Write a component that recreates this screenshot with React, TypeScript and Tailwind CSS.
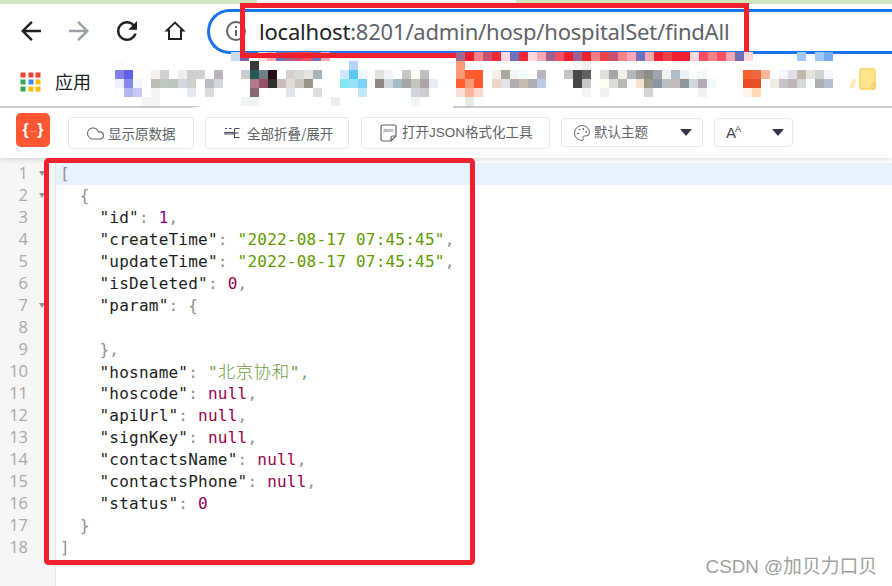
import React from "react";
import { Cloud, Palette } from "lucide-react";

type Tok = [string, string];
const K = "text-[#1c1c1c]";
const P = "text-[#8f8f8f]";
const S = "text-[#5f9a00]";
const N = "text-[#900090]";
const Z = "text-[#99004d]";

const key = (k: string, rest: Tok[]): Tok[] => [["    ", K], [`"${k}"`, K], [": ", P], ...rest];

const lines: Tok[][] = [
  [["[", P]],
  [["  {", P]],
  key("id", [["1", N], [",", P]]),
  key("createTime", [['"2022-08-17 07:45:45"', S], [",", P]]),
  key("updateTime", [['"2022-08-17 07:45:45"', S], [",", P]]),
  key("isDeleted", [["0", Z], [",", P]]),
  key("param", [["{", P]]),
  [["", P]],
  [["    },", P]],
  key("hosname", [['"北京协和"', "text-[#6f9a3c]"], [",", P]]),
  key("hoscode", [["null", Z], [",", P]]),
  key("apiUrl", [["null", Z], [",", P]]),
  key("signKey", [["null", Z], [",", P]]),
  key("contactsName", [["null", Z], [",", P]]),
  key("contactsPhone", [["null", Z], [",", P]]),
  key("status", [["0", Z]]),
  [["  }", P]],
  [["]", P]],
];

type Row = [number, number, number, string];
const rows: Row[] = [
  [231, 52, 9, "#c8dcf0 #8060a8 - #ffd8e0 #f8a8b0 #7070b8 #a06090 #c85070 #f85060 #7070b8 #f8a8b0"],
  [456, 52, 9, "#a06890 #f02030 #f88088 #c85070 #f02838 #ffd8e0 #7070b8 #f02838 #ffd8e0 #f8a8b0 #a06090 #f85060 #f02030 #a06090 #f02030 #f88088 #f04048 #c85070 #f88088 #f8a8b0 #7070b8 #f8a8b0 #f02030 #f04048 #f02030 #f02030 #ffd8e0 #f85060 #f88088 #f85060 #f8a8b0 #7070b8 #ffd8e0"],
  [797, 52, 9, "#a0c8f8 - #a0c8f8 #74acf0"],
  [115, 61, 9, "#fafaff - - - - - - - - - - - - - - #383838 - - - - - - - - - - #b4d4fc"],
  [115, 70, 9, "#8080e8 #6060e8 - - #f5f0ec #d0d0d0 - #eef0ee #d0d0d0 #d0d0d0 - #b8b4b8 - - #cccccc #225a58 #727e88 #280c14 - #d4d0d0 #d8dcdc #e8e4e2 #a8b4bc - - #d0e8fc #5cc8f4 #f0f8ff"],
  [115, 79, 9, "#f0f0fc #8888e8 #f4f4fc - #bcbcb4 #c0c8c4 #c0c4bc #d4d8dc #d0d0d0 - #c0bcc4 #d4d8dc - - - #b07888 #985068 #303030 #c8bcbc #e0dcd8 #ccc8c0 #989488 - - - #80e8f0 #98e0f8 #80d0fc"],
  [115, 88, 9, "- #b4b4f0 #c8c8f4 - #f4f4f4 - - - #e4e8ec - #dcdcdc - - - - #886870 - - - #e0e4ec - - #dcdee0 - - - - #c0e8fc"],
  [115, 97, 9, "- - - #f4f4f4 #f4f4f4 - - - - - - - - - #f0f4f0 #f0f4f0 - - - - - - - - #eeeeee"],
  [375, 61, 9, "- - - - - - - - - #ff9878 - - - - - - - - - - - - #f8f8f8 #f0f0f0"],
  [375, 70, 9, "#e0e0dc #f0f4f4 - #c8c8c8 #fffcf4 #c0c0c4 - - - #ff9878 #ff5c30 #ff5830 - #f4f0e8 #a8a8a0 #f4f4f4 #f0fcf8 #fffff8 #b4b8bc - - #c4c4c4 #484848 #606060 - #e0e0dc #a4a4a4 #f4f0e8 #b4b8bc #a09c98"],
  [375, 79, 9, "#908884 #d0d8dc #a8bcc8 #a8a4a4 #c4c4c0 #aca4a4 #e8ecf4 - - #ff6030 #ff9878 #ff5830 - #e8d8c8 #e4e4e8 #b0acb0 #c8bcb0 #b0acb4 #bccce0 - - - #484848 #c8c8c8 - #fffff0 #dcdcd8 #b8b8b8 #f8fafc #f4e0cc"],
  [375, 88, 9, "- - - - #d0d4d8 #cccccc - - - #ffe0d8 #ffb4a0 #ffd8d0 - - - - - - - - - - - #f4f4f4 - #f0f0f0"],
  [375, 97, 9, "- - - - #f0f4f4 - - - - - #e8ece8"],
  [644, 70, 9, "#8c8c88 #a0a4ac #f0f4f0 #b0bcc8 #f0eef0 - #f4f8fc - - - - #f46030 #f06840 #ffb49c - #f4f8fc #e0e0e8 #c0b8ac #e4e4e0 #d0d4d0 #f4f8fc"],
  [644, 79, 9, "#989c88 #9094a0 #b8c0c0 #c4bcb8 #8c949c #d0d8dc #b4acb4 #f0f8ff - - - #e84c28 #e85028 - #f0ece4 #c4c4c8 #c0b4b8 #d4d8d8 - #acb0ac #b4c0d0"],
  [644, 88, 9, "#d4d4d4 - - - - - #f0f0f0 - - - - #fff4e8 #ffd8b8"],
];

function Mosaic() {
  return (
    <>
      {rows.flatMap(([x, y, s, str], r) =>
        str.split(" ").map((c, i) =>
          c === "-" ? null : <rect key={`${r}-${i}`} x={x + i * s} y={y} width={s} height={s} fill={c} />
        )
      )}
    </>
  );
}

function Caret() {
  return (
    <svg width="12" height="7" viewBox="0 0 12 7" className="shrink-0">
      <path d="M0 0h12L6 7z" fill="#33364a" />
    </svg>
  );
}

const apps = ["#ea4335", "#ea4335", "#ea4335", "#34a853", "#4285f4", "#fbbc04", "#34a853", "#fbbc04", "#fbbc04"];

export default function App() {
  return (
    <div className="relative flex h-[586px] w-[892px] flex-col overflow-hidden bg-white [font-family:'Noto_Sans_CJK_SC',sans-serif]">
      {/* top strip */}
      <div className="flex h-1 shrink-0">
        <div className="w-[257px] bg-[#cde8bf]" />
        <div className="w-[259px] bg-white" />
        <div className="flex-1 bg-[#cde8bf]" />
      </div>

      {/* nav bar */}
      <div className="flex h-[54px] shrink-0 items-center pl-4">
        <svg width="30" height="30" viewBox="0 0 24 24" className="shrink-0" fill="#202124">
          <path d="M20 11H7.830l5.590-5.590L12 4l-8 8 8 8 1.410-1.410L7.830 13H20v-2z" />
        </svg>
        <svg width="30" height="30" viewBox="0 0 24 24" className="ml-[18px] shrink-0" fill="#9aa0a6">
          <path d="M4 11h12.170l-5.590-5.590L12 4l8 8-8 8-1.410-1.410L16.170 13H4v-2z" />
        </svg>
        <svg width="30" height="30" viewBox="0 0 24 24" className="ml-[18px] shrink-0" fill="#202124">
          <path d="M17.650 6.350C16.200 4.900 14.210 4 12 4c-4.420 0-7.990 3.580-7.990 8s3.570 8 7.990 8c3.730 0 6.840-2.550 7.730-6h-2.080c-.820 2.330-3.040 4-5.650 4-3.310 0-6-2.690-6-6s2.690-6 6-6c1.660 0 3.140.690 4.220 1.780L13 11h7V4l-2.350 2.350z" />
        </svg>
        <svg width="24" height="24" viewBox="0 0 24 24" className="ml-[21px] shrink-0" fill="none" stroke="#202124" strokeWidth="2" strokeLinejoin="miter">
          <path d="M12 3.600 3.800 11.400H6V20h12v-8.600h2.200z" />
        </svg>
        <div className="ml-[20px] flex h-[45px] w-[720px] shrink-0 items-center rounded-l-[23px] border-y-[3px] border-l-[3px] border-[#1a73e8] pl-[14px]">
          <svg width="24" height="24" viewBox="0 0 24 24" className="shrink-0" fill="#5f6368">
            <path d="M11 7h2v2h-2zm0 4h2v6h-2zm1-9a10 10 0 1 0 0 20 10 10 0 0 0 0-20zm0 18a8 8 0 1 1 0-16 8 8 0 0 1 0 16z" />
          </svg>
          <div className="ml-[11px] whitespace-nowrap text-[22px] leading-none tracking-[-0.2px] text-[#5f6368] [font-family:'Noto_Sans',sans-serif]">
            <span className="text-[#202124]">localhost</span>:8201/admin/hosp/hospitalSet/findAll
          </div>
        </div>
      </div>

      {/* bookmarks */}
      <div className="flex h-[48px] shrink-0 items-center pb-[3px] pl-[21px]">
        <div className="grid w-5 shrink-0 translate-y-px grid-cols-3 gap-[3px]">
          {apps.map((c, i) => (
            <div key={i} className="h-1 w-1 scale-125" style={{ background: c }} />
          ))}
        </div>
        <span className="ml-[14px] text-[18px] leading-none text-[#202124]">应用</span>
      </div>

      <div className="h-0.5 shrink-0 bg-[#cccccc]" />

      {/* toolbar */}
      <div className="z-10 flex h-[50px] shrink-0 items-center bg-white pl-4 text-[13.500px] text-[#606266] shadow-[0_2px_5px_rgba(0,0,0,0.12)]">
        <div className="mb-[6px] flex h-[34px] w-[34px] shrink-0 items-center justify-center rounded-[5px] bg-[#ff5733] text-white [font-family:'Liberation_Sans',sans-serif]">
          <span className="text-[16px] font-bold leading-none">{"{"}</span>
          <span className="px-px text-[8px] leading-none">...</span>
          <span className="text-[16px] font-bold leading-none">{"}"}</span>
        </div>
        <div className="ml-[18px] flex h-8 w-[126px] shrink-0 items-center rounded border border-[#e4e7ed] pl-[17px]">
          <Cloud size={19} strokeWidth={1.4} className="text-[#5f6270]" />
          <span className="ml-[3px]">显示原数据</span>
        </div>
        <div className="ml-[11px] flex h-8 w-[144px] shrink-0 items-center rounded border border-[#e4e7ed] pl-[18px]">
          <svg width="16" height="14" viewBox="0 0 16 14" className="shrink-0" fill="none" stroke="#44475a" strokeWidth="1.200">
            <path d="M1 2.500h2M5 2.500h2.500M1 6.500h8v1.500H1zM11 2.500h4.500M10.500 2.500v9h5M10.500 7h4" />
          </svg>
          <span className="ml-[7px]">全部折叠/展开</span>
        </div>
        <div className="ml-3 flex h-8 w-[189px] shrink-0 items-center rounded border border-[#e4e7ed] pl-[18px]">
          <svg width="17" height="18" viewBox="0 0 17 18" className="shrink-0" fill="none" stroke="#5f6270" strokeWidth="1.200">
            <path d="M3 1h11a2 2 0 0 1 2 2v9l-5 5H3a2 2 0 0 1-2-2V3a2 2 0 0 1 2-2zM16 12h-3a2 2 0 0 0-2 2v3" />
            <text x="3.500" y="8" fontSize="5.500" fill="#5f6270" stroke="none" fontFamily="'Liberation Sans',sans-serif">json</text>
          </svg>
          <span className="ml-[5px] [font-family:'Liberation_Sans','Noto_Sans_CJK_SC',sans-serif]">打开JSON格式化工具</span>
        </div>
        <div className="mb-[1px] ml-[11px] flex h-[29px] w-[142px] shrink-0 items-center rounded border border-[#e4e7ed] pl-[11px]">
          <Palette size={18} strokeWidth={1.300} className="text-[#5f6270]" />
          <span className="ml-[3px] -translate-y-px">默认主题</span>
          <span className="ml-[32px]"><Caret /></span>
        </div>
        <div className="mb-[1px] ml-[11px] flex h-[29px] w-[79px] shrink-0 items-center rounded border border-[#e4e7ed] pl-[11px]">
          <span className="flex w-[15px] items-start leading-none text-[#44475a] [font-family:'Liberation_Sans',sans-serif]">
            <span className="text-[15px]">A</span>
            <span className="-ml-px text-[9px]">A</span>
          </span>
          <span className="ml-[31px]"><Caret /></span>
        </div>
      </div>

      {/* editor */}
      <div className="flex flex-1">
        <div className="w-14 shrink-0 border-r border-[#e6e6e6] bg-[#f6f6f6] pt-[5px] text-[16.500px] text-[#a8a8a8] [font-family:'Open_Sans',sans-serif]">
          {lines.map((_, i) => (
            <div key={i} className="relative flex h-[22px] items-center justify-end pb-[2px] pr-[27px] leading-none">
              {i + 1}
              {(i === 0 || i === 1 || i === 6) && (
                <svg width="6" height="5" viewBox="0 0 6 5" className="absolute left-[39px] top-[8px]">
                  <path d="M0 0h6L3 5z" fill="#909090" />
                </svg>
              )}
            </div>
          ))}
        </div>
        <div className="flex-1 pt-[5px] text-[16px] leading-[22px] tracking-[0.23px] [font-family:'DejaVu_Sans_Mono','Noto_Sans_CJK_SC',monospace]">
          {lines.map((l, i) => (
            <div key={i} className={`h-[22px] whitespace-pre pl-[4px] ${i === 0 ? "bg-[#e8f2ff]" : ""}`}>
              {l.map(([t, c], j) =>
                t.includes("北") ? (
                  <span key={j} className={c}>
                    "<span className="text-[17.500px] font-light tracking-[0.500px]">北京协和</span>"
                  </span>
                ) : (
                  <span key={j} className={c}>{t}</span>
                )
              )}
            </div>
          ))}
        </div>
      </div>

      {/* screenshot annotations: mosaic and red frames */}
      <svg width="892" height="586" viewBox="0 0 892 586" className="pointer-events-none absolute left-0 top-0 z-20">
        <path d="M190 108 L215 104 H440 L453 106 V108z" fill="#fff" />
        <Mosaic />
        <path d="M456 55.500H242.500V5.500H746.500V52" fill="none" stroke="#f0202c" strokeWidth="5" />
        <rect x="46.500" y="160.500" width="426" height="402" rx="2" fill="none" stroke="#f0202c" strokeWidth="5" />
        <path d="M849 88l4-9h3l-2 9z" fill="#fdeeb0" />
        <rect x="860" y="69" width="15" height="20" rx="1.500" fill="#ffe48c" stroke="#f7d45c" strokeWidth="1.500" />
        <rect x="872" y="83" width="3" height="6" rx="1" fill="none" stroke="#f2c94c" strokeWidth="1" />
      </svg>

      <div className="absolute bottom-[9px] right-[15px] z-30 whitespace-nowrap text-[18.800px] leading-none text-[#a0a0a0] [font-family:'Liberation_Sans','Noto_Sans_CJK_SC',sans-serif]">
        CSDN @加贝力口贝
      </div>
    </div>
  );
}
